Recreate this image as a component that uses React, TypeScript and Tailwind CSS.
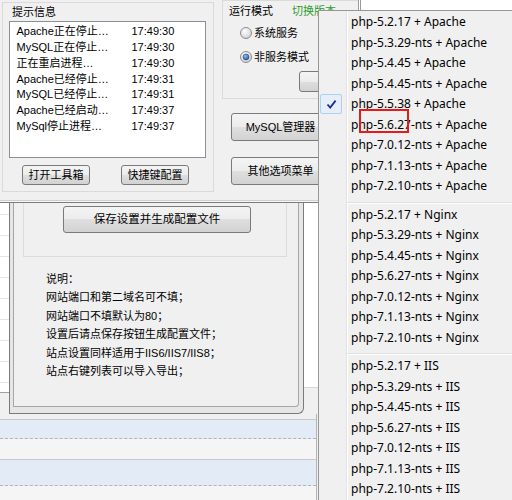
import React from "react";

const apache = [
  "php-5.2.17 + Apache",
  "php-5.3.29-nts + Apache",
  "php-5.4.45 + Apache",
  "php-5.4.45-nts + Apache",
  "php-5.5.38 + Apache",
  "php-5.6.27-nts + Apache",
  "php-7.0.12-nts + Apache",
  "php-7.1.13-nts + Apache",
  "php-7.2.10-nts + Apache",
];
const nginx = [
  "php-5.2.17 + Nginx",
  "php-5.3.29-nts + Nginx",
  "php-5.4.45-nts + Nginx",
  "php-5.6.27-nts + Nginx",
  "php-7.0.12-nts + Nginx",
  "php-7.1.13-nts + Nginx",
  "php-7.2.10-nts + Nginx",
];
const iis = [
  "php-5.2.17 + IIS",
  "php-5.3.29-nts + IIS",
  "php-5.4.45-nts + IIS",
  "php-5.6.27-nts + IIS",
  "php-7.0.12-nts + IIS",
  "php-7.1.13-nts + IIS",
  "php-7.2.10-nts + IIS",
];

const logs: [string, string][] = [
  ["Apache正在停止…", "17:49:30"],
  ["MySQL正在停止…", "17:49:30"],
  ["正在重启进程…", "17:49:30"],
  ["Apache已经停止…", "17:49:31"],
  ["MySQL已经停止…", "17:49:31"],
  ["Apache已经启动…", "17:49:37"],
  ["MySql停止进程…", "17:49:37"],
];

const notes = [
  "说明：",
  "网站端口和第二域名可不填；",
  "网站端口不填默认为80；",
  "设置后请点保存按钮生成配置文件；",
  "站点设置同样适用于IIS6/IIS7/IIS8；",
  "站点右键列表可以导入导出；",
];

const btn =
  "border border-[#7a7a7a] rounded-[3px] bg-[linear-gradient(#f4f4f4,#ececec_50%,#dfdfdf_50%,#d2d2d2)] flex items-center justify-center";

function Radio({ checked }: { checked?: boolean }) {
  return (
    <svg width="12" height="12" viewBox="0 0 12 12" className="flex-none">
      <defs>
        <radialGradient id={checked ? "rgc" : "rgu"} cx="0.4" cy="0.35" r="0.7">
          <stop offset="0" stopColor="#ffffff" />
          <stop offset="1" stopColor="#d0d0d0" />
        </radialGradient>
        <radialGradient id="dot" cx="0.4" cy="0.35" r="0.7">
          <stop offset="0" stopColor="#8fc2f5" />
          <stop offset="1" stopColor="#1b4f96" />
        </radialGradient>
      </defs>
      <circle cx="6" cy="6" r="5.5" fill={`url(#${checked ? "rgc" : "rgu"})`} stroke="#8d8d8d" />
      {checked && <circle cx="6" cy="6" r="3" fill="url(#dot)" stroke="#26528f" strokeWidth="0.6" />}
    </svg>
  );
}

function MenuItem({ label, checked }: { label: string; checked?: boolean }) {
  return (
    <div className="flex items-center h-[20.5px]">
      <div className="w-[28px] h-full flex-none flex items-center">
        {checked && (
          <div className="ml-[1px] w-[22px] h-[20px] border border-[#aecff7] bg-[#e6eefa] rounded-[2px] flex items-center justify-center">
            <svg width="11" height="11" viewBox="0 0 11 11">
              <path d="M1.5 5.5 L4.2 8.6 L9.6 1.6" fill="none" stroke="#1a2d8c" strokeWidth="1.8" />
            </svg>
          </div>
        )}
      </div>
      <span className="ml-[4px] whitespace-nowrap">{label}</span>
    </div>
  );
}

function Sep() {
  return (
    <div className="h-[8px] pl-[28px] pt-[5px]">
      <div className="border-t border-[#e0e0e0] border-b border-b-white" />
    </div>
  );
}

export default function App() {
  return (
    <div className="relative w-[512px] h-[500px] overflow-hidden bg-[#f0f0f0] text-black text-[11px] leading-none font-['Liberation_Sans','Noto_Sans_CJK_SC',sans-serif]">
      {/* top window area */}
      <div className="flex items-start h-[200px]">
        {/* 提示信息 */}
        <div className="ml-[2px] mt-[2px] w-[212px] h-[190px] border border-[#dadada] pl-[6px] pt-[1px]">
          <div className="h-[16px] flex items-center pl-[3px]">提示信息</div>
          <div className="mt-[1px] w-[197px] h-[137px] border border-[#8b8f96] bg-white pt-[2px] pl-[6.5px]">
            {logs.map(([t, time], i) => (
              <div key={i} className="flex items-center h-[15.75px]">
                <span className="w-[115px] whitespace-nowrap">{t}</span>
                <span>{time}</span>
              </div>
            ))}
          </div>
          <div className="flex mt-[7px] ml-[13px]">
            <div className={`${btn} w-[68px] h-[20px]`}>打开工具箱</div>
            <div className={`${btn} w-[68px] h-[20px] ml-[31px]`}>快捷键配置</div>
          </div>
        </div>

        {/* 运行模式 column */}
        <div className="ml-[8px] w-[136px] flex flex-col">
          <div className="h-[99px] border border-[#dadada] border-r-0 pl-[6px] pt-[2px]">
            <div className="h-[16px] flex items-center">
              <span>运行模式</span>
              <span className="ml-[19px] text-[#2f9c2f]">切换版本</span>
            </div>
            <div className="mt-[2px] h-[24px] flex items-center pl-[11px]">
              <Radio />
              <span className="ml-[2px]">系统服务</span>
            </div>
            <div className="h-[24px] flex items-center pl-[11px]">
              <Radio checked />
              <span className="ml-[2px]">非服务模式</span>
            </div>
            <div className={`${btn} mt-[2px] ml-[70px] w-[60px] h-[21px]`}>应用</div>
          </div>
          <div className={`${btn} mt-[14px] ml-[9px] w-[99px] h-[28px]`}>MySQL管理器</div>
          <div className={`${btn} mt-[16px] ml-[9px] w-[99px] h-[28px]`}>其他选项菜单</div>
        </div>

        <div className="w-[154px] h-[10px] border-l-[3px] border-double border-[#9a9a9a] bg-white" />
      </div>
      <div className="h-[3px] border-t border-[#cfcfcf] border-b border-b-[#7c7c7c] bg-[#f7f7f7]" />

      {/* lower area */}
      <div className="flex h-[211px]">
        <div className="w-[9px] flex flex-col">
          <div className="h-[190px] bg-white border-b border-[#a0a0a0] flex flex-col">
            <div className="h-[12px] border-b border-[#e6e6e6]" />
            {Array.from({ length: 8 }).map((_, i) => (
              <div key={i} className="h-[21px] border-b border-[#e6e6e6]" />
            ))}
          </div>
        </div>
        <div className="w-[295px] border-l border-r border-b border-[#7a7a7a] rounded-br-[6px] bg-[#e6e6e6] pl-[3px] pr-[4px] pb-[6px]">
          <div className="h-full border-l border-r border-b border-[#a6a6a6] rounded-br-[4px] bg-[#f0f0f0] flex flex-col">
            <div className="ml-[9px] mr-[11px] h-[54px] border-l border-r border-b border-[#dcdcdc] pl-[39px] pt-[3px]">
              <div className={`${btn} w-[188px] h-[27px] text-[11.5px]`}>保存设置并生成配置文件</div>
            </div>
            <div className="mt-[13px] pl-[32px] flex flex-col">
              {notes.map((n, i) => (
                <div key={i} className="h-[18.5px] flex items-center whitespace-nowrap">
                  {n}
                </div>
              ))}
            </div>
          </div>
        </div>
        <div className="w-[14px] flex flex-col">
          <div className="h-[185px] bg-white border-b border-[#d8d8d8]" />
        </div>
      </div>

      {/* bottom list */}
      <div className="w-[317px] border-r border-[#b5b5b5] flex flex-col">
        <div className="h-[6px] border-b border-[#c9c9c9]" />
        <div className="h-[19px] bg-[#e3ebf6] border-b border-dashed border-[#b4b4b4]" />
        <div className="h-[21px] bg-[#f5f5f5] border-b border-[#c8c8c8]" />
        <div className="h-[26px] bg-[#e3ebf6] border-b border-dashed border-[#b4b4b4]" />
        <div className="h-[20px] bg-[#f5f5f5]" />
      </div>

      {/* dropdown menu */}
      <div className="absolute left-[318px] top-[10px] w-[200px] h-[495px] border border-[#979797] pt-[1px] text-[12px] font-['Noto_Sans','Noto_Sans_CJK_SC',sans-serif] bg-[linear-gradient(to_right,#f0f0f0_27px,#e2e3e3_27px,#e2e3e3_28px,#ffffff_28px,#ffffff_29px,#f0f0f0_29px)]">
        {apache.map((l, i) => (
          <MenuItem key={l} label={l} checked={i === 4} />
        ))}
        <Sep />
        {nginx.map((l) => (
          <MenuItem key={l} label={l} />
        ))}
        <Sep />
        {iis.map((l) => (
          <MenuItem key={l} label={l} />
        ))}
      </div>

      {/* red annotation box */}
      <div className="absolute left-[359px] top-[109px] w-[50px] h-[24px] border-2 border-[#e31b1b]" />
    </div>
  );
}
